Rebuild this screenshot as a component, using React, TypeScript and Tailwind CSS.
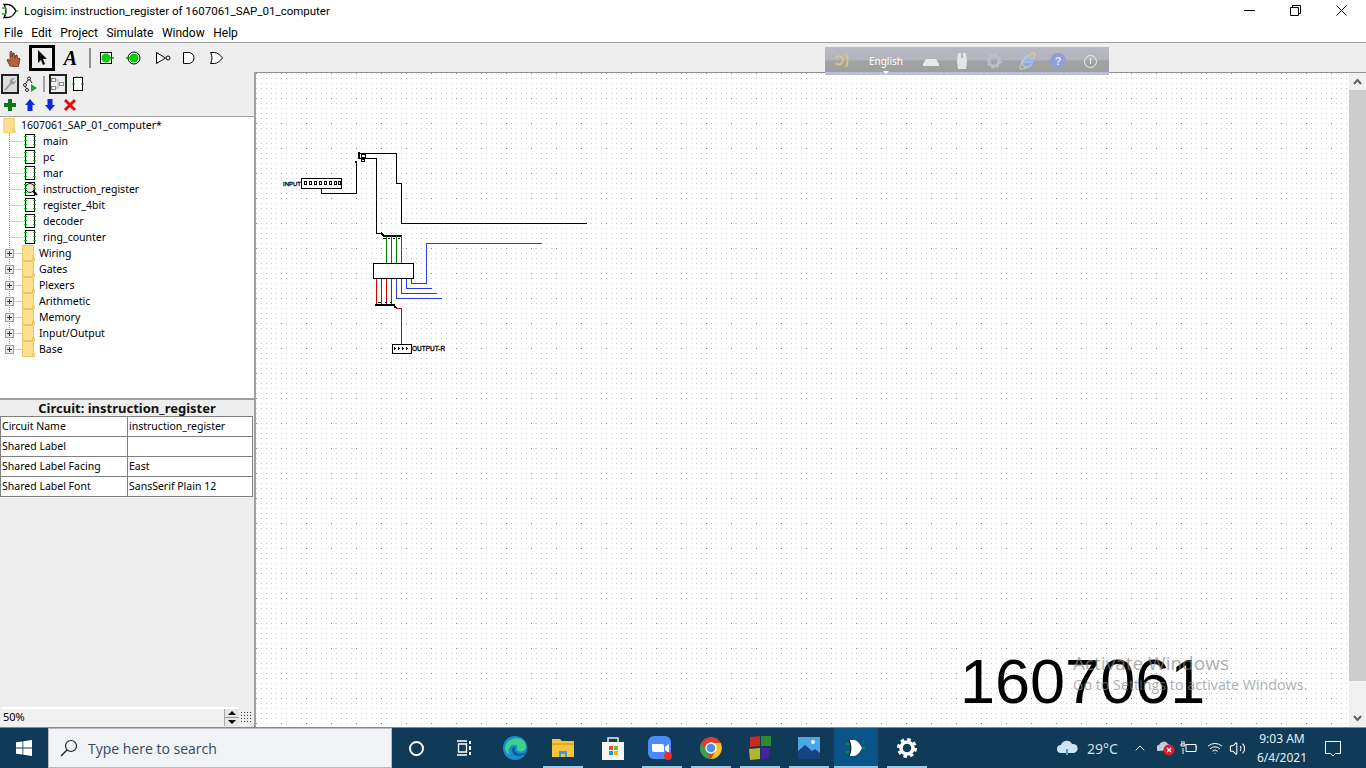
import { ChevronUp, Wifi, Volume2 } from 'lucide-react'

const circuits = ['main', 'pc', 'mar', 'instruction_register', 'register_4bit', 'decoder', 'ring_counter']
const libraries = ['Wiring', 'Gates', 'Plexers', 'Arithmetic', 'Memory', 'Input/Output', 'Base']
const attributes = [
  ['Circuit Name', 'instruction_register'],
  ['Shared Label', ''],
  ['Shared Label Facing', 'East'],
  ['Shared Label Font', 'SansSerif Plain 12'],
]
const menus = ['File', 'Edit', 'Project', 'Simulate', 'Window', 'Help']

function LogisimGate({ className, fill = 'none', stroke = '#000' }: { className?: string; fill?: string; stroke?: string }) {
  return (
    <svg className={className} viewBox="0 0 16 16">
      <path d="M2 1.500h4c3 0 6 3 8 6.500-2 3.500-5 6.500-8 6.500H2c2.500-4 2.500-9 0-13z" fill={fill} stroke={stroke} strokeWidth="1.300" />
      <path d="M0 5h4M0 11h4M14 8h2" stroke="#00c000" strokeWidth="1.300" />
    </svg>
  )
}

function Folder({ className }: { className?: string }) {
  return (
    <svg className={className} viewBox="0 0 13 16">
      <path d="M.5.5h11v13h1v2H.5z" fill="#fde08f" stroke="#ecc55f" />
      <path d="M10.500 15.500v-3h2" fill="none" stroke="#ecc55f" />
    </svg>
  )
}

function CircuitIcon({ zoomed }: { zoomed?: boolean }) {
  return (
    <svg className="w-[14px] h-[16px] shrink-0 overflow-visible" viewBox="0 0 14 16">
      <rect x="1.500" y="1.500" width="9" height="13" fill="#fff" stroke="#000" />
      {zoomed && <circle cx="6" cy="7" r="4.500" fill="#e4e4ee" stroke="#222" />}
      <path d="M0 3.500h3M0 7.500h3M0 11.500h3M9 3.500h3M9 7.500h3M9 11.500h3" stroke="#00c400" />
      {zoomed && <path d="M9 10l4 4" stroke="#000" strokeWidth="2" />}
    </svg>
  )
}

function TreeGuide({ expand, last }: { expand?: boolean; last?: boolean }) {
  return (
    <svg className="w-[22px] h-[16px] shrink-0" viewBox="0 0 22 16">
      <path d={`M9.500 0V${last ? 8 : 16}M9.500 8.500H22`} stroke="#9a9a9a" strokeDasharray="1 1" fill="none" />
      {expand && (
        <>
          <rect x="5.500" y="4.500" width="8" height="8" fill="#e8e8ee" stroke="#a0a0a8" />
          <path d="M7 8.500h5M9.500 6v5" stroke="#334" />
        </>
      )}
    </svg>
  )
}

function ToolStrip() {
  return (
    <div className="h-[29px] bg-[#eeeeee] flex items-center pl-[5px]">
      <svg className="w-[18px] h-[18px] mt-[1px]" viewBox="0 0 18 18">
        <path d="M5 17l-3-6 1-1 2 2V3l1-1 1 1v5l1-4 1 0 1 5 1-3 1 0 1 4 1-1 1 1-1 5-1 3z" fill="#b8613f" stroke="#5a2f1e" strokeWidth=".8" />
      </svg>
      <div className="w-[26px] h-[26px] ml-[6px] border-[3px] border-black flex items-center justify-center">
        <svg className="w-[14px] h-[18px]" viewBox="0 0 14 18">
          <path d="M3 1v13l3-3 2 5 2-1-2-5h4z" fill="#000" />
        </svg>
      </div>
      <span className="w-[31px] text-center font-['Liberation_Serif',serif] italic font-bold text-[20px] leading-none">A</span>
      <div className="w-[2px] h-[20px] bg-[#909090] ml-[3px]" />
      <svg className="w-[16px] h-[16px] ml-[7px]" viewBox="0 0 16 16">
        <rect x="2.500" y="2.500" width="11" height="11" fill="#fff" stroke="#000" />
        <circle cx="8" cy="8" r="4.500" fill="#00d000" />
        <path d="M12 8h4" stroke="#00a000" strokeWidth="1.500" />
      </svg>
      <svg className="w-[16px] h-[16px] ml-[12px]" viewBox="0 0 16 16">
        <circle cx="8" cy="8" r="6" fill="#fff" stroke="#000" />
        <circle cx="8" cy="8" r="4.500" fill="#00d000" />
        <path d="M0 8h4" stroke="#00a000" strokeWidth="1.500" />
      </svg>
      <svg className="w-[16px] h-[16px] ml-[13px]" viewBox="0 0 16 16">
        <path d="M1.500 2.500l9 5.500-9 5.500z" fill="#fff" stroke="#000" />
        <circle cx="13" cy="8" r="2" fill="#fff" stroke="#000" />
      </svg>
      <svg className="w-[16px] h-[16px] ml-[10px]" viewBox="0 0 16 16">
        <path d="M2.500 2.500h5a5.500 5.500 0 010 11h-5z" fill="#fff" stroke="#000" />
      </svg>
      <svg className="w-[16px] h-[16px] ml-[11px]" viewBox="0 0 16 16">
        <path d="M2.500 2.500h4c3 0 6 3 8 5.500-2 2.500-5 5.500-8 5.500h-4c2-3.500 2-7.500 0-11z" fill="#fff" stroke="#000" />
      </svg>
    </div>
  )
}

function ExplorerBar() {
  return (
    <>
      <div className="h-[23px] flex items-center pl-[1px] pt-[1px]">
        <div className="w-[18px] h-[20px] border-[2px] border-[#222] bg-[#dddddd] flex items-center justify-center">
          <svg className="w-[14px] h-[14px]" viewBox="0 0 14 14">
            <path d="M1 13l6-7c-1-3 1-5 5-5L9.500 3.500l1.500 1.500L13 3c0 3-2 5-5 4.500l-5 6z" fill="#9a9a9a" />
          </svg>
        </div>
        <svg className="w-[16px] h-[16px] ml-[3px]" viewBox="0 0 16 16">
          <circle cx="7" cy="2.500" r="1.500" fill="#fff" stroke="#222" />
          <circle cx="3" cy="9" r="1.500" fill="#fff" stroke="#222" />
          <circle cx="5" cy="14" r="1.500" fill="#fff" stroke="#222" />
          <path d="M6 4L3.500 7.500M3 10.500l1.500 2M8 4l2 3" fill="none" stroke="#222" />
          <path d="M9 8l6 4-6 4z" fill="#2d9a3c" />
        </svg>
        <div className="w-[2px] h-[16px] bg-[#a0a0a0] ml-[5px]" />
        <div className="w-[18px] h-[20px] ml-[4px] border-[2px] border-[#222] flex items-center justify-center">
          <svg className="w-[14px] h-[14px]" viewBox="0 0 14 14">
            <path d="M4 3h3v8H4M7 7h2" fill="none" stroke="#9fc09f" />
            <rect x=".5" y="1.500" width="4" height="3" fill="#eee" stroke="#888" />
            <rect x=".5" y="9.500" width="4" height="3" fill="#eee" stroke="#888" />
            <rect x="8.500" y="5.500" width="4" height="3" fill="#eee" stroke="#888" />
          </svg>
        </div>
        <svg className="w-[14px] h-[16px] ml-[4px]" viewBox="0 0 14 16">
          <rect x="2.500" y="1.500" width="9" height="13" fill="#fff" stroke="#000" />
          <path d="M5 1h2M9 1h2M1 8h3M10 8h3" stroke="#00b000" />
        </svg>
      </div>
      <div className="h-[21px] flex items-center pl-[3px] pb-[2px] gap-[6px]">
        <svg className="w-[14px] h-[14px]" viewBox="0 0 14 14"><path d="M5 1h4v4h4v4H9v4H5V9H1V5h4z" fill="#0a7a18" /></svg>
        <svg className="w-[14px] h-[14px]" viewBox="0 0 14 14"><path d="M7 1l5 6H9.500v6h-5V7H2z" fill="#0a2ae0" /></svg>
        <svg className="w-[14px] h-[14px]" viewBox="0 0 14 14"><path d="M7 13l5-6H9.500V1h-5v6H2z" fill="#0a2ae0" /></svg>
        <svg className="w-[14px] h-[14px]" viewBox="0 0 14 14"><path d="M2 2l10 10M12 2L2 12" stroke="#e01010" strokeWidth="3" /></svg>
      </div>
    </>
  )
}

function ProjectTree() {
  return (
    <div className="h-[284px] bg-white border-t border-[#a0a0a0] border-b-2 border-b-[#a0a0a0] overflow-hidden font-['Noto_Sans',sans-serif] text-[10.500px]">
      <div className="h-[16px] flex items-center pl-[3px]">
        <Folder className="w-[13px] h-[15px] shrink-0" />
        <span className="ml-[5px] mt-[2px]">1607061_SAP_01_computer*</span>
      </div>
      {circuits.map(name => (
        <div key={name} className="h-[16px] flex items-center">
          <TreeGuide />
          <div className="ml-[2px]"><CircuitIcon zoomed={name === 'instruction_register'} /></div>
          <span className="ml-[5px] mt-[2px]">{name}</span>
        </div>
      ))}
      {libraries.map((name, i) => (
        <div key={name} className="h-[16px] flex items-center">
          <TreeGuide expand last={i === libraries.length - 1} />
          <Folder className="w-[13px] h-[16px] shrink-0" />
          <span className="ml-[4px] mt-[2px]">{name}</span>
        </div>
      ))}
    </div>
  )
}

function AttributeTable() {
  return (
    <div className="font-['Noto_Sans',sans-serif] text-[10.500px]">
      <div className="h-[16px] pt-[2px] flex items-center justify-center font-bold text-[13px] text-[#111]">Circuit: instruction_register</div>
      <div className="mr-[1px] border-t border-l border-[#808080]">
        {attributes.map(([label, value]) => (
          <div key={label} className="h-[20px] flex bg-white border-b border-[#808080]">
            <div className="w-[127px] pl-[1px] flex items-center border-r border-[#808080]">{label}</div>
            <div className="flex-1 pl-[1px] flex items-center border-r border-[#808080]">{value}</div>
          </div>
        ))}
      </div>
    </div>
  )
}

function ZoomControl() {
  return (
    <div className="h-[20px] flex items-stretch pb-[1px] pl-[1px] font-['Noto_Sans',sans-serif] text-[11px]">
      <div className="w-[238px] bg-[#f0f0f0] border-t-2 border-white flex items-center pl-[2px] relative">
        50%
        <div className="absolute right-0 top-0 bottom-0 w-[15px] flex flex-col bg-[#e6e6e6] border-l border-[#aaa]">
          <div className="flex-1 flex items-center justify-center border-b border-[#999]">
            <div className="w-0 h-0 border-x-[4px] border-x-transparent border-b-[4px] border-b-black" />
          </div>
          <div className="flex-1 flex items-center justify-center">
            <div className="w-0 h-0 border-x-[4px] border-x-transparent border-t-[4px] border-t-black" />
          </div>
        </div>
      </div>
      <div className="flex-1 flex items-center justify-center">
        <svg className="w-[12px] h-[12px]" viewBox="0 0 12 12">
          <path d="M0 1.500h12M0 4.500h12M0 7.500h12M0 10.500h12" stroke="#333" strokeDasharray="1 2" />
        </svg>
      </div>
    </div>
  )
}

function Circuit() {
  const green = '#007a00'
  const blue = '#2a3ae6'
  const red = '#d20000'
  return (
    <svg className="w-full h-full block" shapeRendering="crispEdges">
      <defs>
        <pattern id="fine" width="5" height="5" patternUnits="userSpaceOnUse">
          <rect width="1" height="1" fill="#d2d2d2" />
        </pattern>
        <pattern id="coarse" width="25" height="25" patternUnits="userSpaceOnUse">
          <rect width="1" height="1" fill="#808080" />
        </pattern>
      </defs>
      <rect width="100%" height="100%" fill="url(#fine)" />
      <rect width="100%" height="100%" fill="url(#coarse)" />
      <g transform="translate(-256 -73)" fill="none" stroke="#000">
        <path d="M358.500 153.500H396.500V183.500H401.500V223.500H586.500" />
        <path d="M360 158.500H376.500V233.500H381" />
        <path d="M321.500 188V193.500H356.500V161" />
        <path d="M358.500 152V159" strokeWidth="2" />
        <rect x="361.500" y="154.500" width="4" height="3" />
        <rect x="361.500" y="159.500" width="3" height="2" />
        <path d="M355 162h2" strokeWidth="2" />
        <rect x="301.500" y="178.500" width="40" height="10" fill="#fff" />
        <path d="M304 181.500v3h2v-3zM309 181.500v3h2v-3zM314 181.500v3h2v-3zM319 181.500v3h2v-3zM324 181.500v3h2v-3zM329 181.500v3h2v-3zM334 181.500v3h2v-3zM338 181.500v3h2v-3z" />
        <path d="M381 233l3 3" strokeWidth="2" />
        <path d="M383 235.500H402" strokeWidth="2" />
        <g stroke={green}>
          <path d="M386.500 236V263M391.500 236V263M396.500 236V263M401.500 236V263" />
        </g>
        <path d="M383 238.500h3M388 238.500h2M393 238.500h2M398 238.500h2" />
        <rect x="373.500" y="263.500" width="40" height="15" fill="#fff" />
        <g stroke={red}>
          <path d="M376.500 279V304M381.500 279V304M386.500 279V304M391.500 279V304" />
          <path d="M396 308.500H401.500V344" />
        </g>
        <g stroke={blue}>
          <path d="M396.500 279V298.500H441.500" />
          <path d="M401.500 279V293.500H436.500" />
          <path d="M406.500 279V288.500H431.500" />
          <path d="M411.500 279V283.500H426.500V243.500H541.500" />
        </g>
        <path d="M375 304.500H394" strokeWidth="2" />
        <path d="M378 302.500h3M385 302.500h2M390 302.500h2" />
        <path d="M393 304l3 4" strokeWidth="2" />
        <rect x="392.500" y="344.500" width="19" height="9" fill="#fff" />
        <path d="M394 348.500h2M398 348.500h2M402 348.500h2M406 348.500h2M394 346.500v3M398 346.500v3M402 346.500v3M406 346.500v3" />
      </g>
      <text x="27" y="113" fontSize="6" fill="#000" stroke="#000" strokeWidth=".3" className="font-['Liberation_Sans',sans-serif]">INPUT</text>
      <text x="156" y="278" fontSize="6.500" fill="#000" stroke="#000" strokeWidth=".3" className="font-['Liberation_Sans',sans-serif]">OUTPUT-R</text>
    </svg>
  )
}

function ScrollBar() {
  return (
    <div className="w-[17px] shrink-0 bg-[#f0f0f0] flex flex-col items-stretch">
      <div className="h-[17px] flex items-center justify-center">
        <svg className="w-[9px] h-[7px]" viewBox="0 0 9 7"><path d="M1 6l3.500-4L8 6" fill="none" stroke="#606060" strokeWidth="2" /></svg>
      </div>
      <div className="h-[591px] bg-[#cdcdcd]" />
      <div className="flex-1" />
      <div className="h-[17px] flex items-center justify-center">
        <svg className="w-[9px] h-[7px]" viewBox="0 0 9 7"><path d="M1 1l3.500 4L8 1" fill="none" stroke="#606060" strokeWidth="2" /></svg>
      </div>
    </div>
  )
}

function LanguageBar() {
  return (
    <div className="absolute left-[825px] top-[47px] w-[284px] h-[28px] bg-[linear-gradient(#b7b9c3_0%,#b3b4bd_45%,#a3a3a3_50%,#9f9f9f_88%,#b9bfd8_89%)] flex items-center text-white">
      <svg className="w-[16px] h-[18px] ml-[9px] shrink-0" viewBox="0 0 16 18">
        <path d="M1 6c3-3 8-2 8 2s-5 6-7 3M12 2c2 4 2 9 0 13" fill="none" stroke="#dcc583" strokeWidth="1.800" />
      </svg>
      <div className="w-[60px] ml-[6px] flex flex-col items-center shrink-0 pt-[6px]">
        <span className="text-[10px] leading-[12px] font-['Noto_Sans',sans-serif]">English</span>
        <div className="w-0 h-0 mt-[4px] border-x-[3px] border-x-transparent border-t-[3px] border-t-white" />
      </div>
      <svg className="w-[18px] h-[14px] ml-[6px] shrink-0" viewBox="0 0 18 14">
        <path d="M4 5h10l3 5v2H1v-2z" fill="#e8e8e8" />
      </svg>
      <svg className="w-[12px] h-[18px] ml-[16px] shrink-0" viewBox="0 0 12 18">
        <path d="M2 1h3v5h2V1h3l1 8-1 8H2L1 9z" fill="#e5e5e5" />
      </svg>
      <svg className="w-[16px] h-[16px] ml-[18px] shrink-0" viewBox="0 0 16 16">
        <circle cx="8" cy="8" r="5" fill="none" stroke="#b9c0cc" strokeWidth="3" />
        <circle cx="8" cy="8" r="7" fill="none" stroke="#b9c0cc" strokeWidth="1.500" strokeDasharray="2.500 3" />
      </svg>
      <svg className="w-[16px] h-[18px] ml-[17px] shrink-0" viewBox="0 0 16 18">
        <path d="M3.500 10h9.500c0-6-7-7-9.500-2-1 3 0 7 4 7 2 0 4-1 5-3" fill="none" stroke="#9ac0f4" strokeWidth="2.400" />
        <path d="M1 17C0 11 9 2 15 1c1.500 2 0 5-1 6M1 17c2 1 5-1 7-2" fill="none" stroke="#ecd386" strokeWidth="1" />
      </svg>
      <div className="w-[16px] h-[16px] ml-[15px] shrink-0 rounded-full bg-[#8f9fd8] flex items-center justify-center text-[11px] font-bold text-[#dfe6fa] leading-none">?</div>
      <div className="w-[13px] h-[13px] ml-[18px] shrink-0 rounded-full border-[1.500px] border-[#eeeeee] flex items-center justify-center">
        <div className="w-[1.500px] h-[6px] bg-[#eeeeee]" />
      </div>
    </div>
  )
}

function TaskIcon({ children, active, open, w = 49, className = '' }: { children: React.ReactNode; active?: boolean; open?: boolean; w?: number; className?: string }) {
  return (
    <div className={`relative flex items-center justify-center shrink-0 h-full ${active ? 'bg-[#0a5488]' : ''} ${className}`} style={{ width: w }}>
      {children}
      {open && <div className="absolute bottom-0 left-0 right-0 h-[2px] bg-[#99c9e8]" />}
    </div>
  )
}

function Taskbar() {
  return (
    <div className="h-[41px] shrink-0 bg-[#0f3b58] border-t border-[#7d8a94] flex items-stretch text-white font-['Noto_Sans',sans-serif]">
      <div className="w-[48px] flex items-center justify-center">
        <svg className="w-[16px] h-[16px]" viewBox="0 0 16 16">
          <path d="M0 2.300L6.500 1.400V7.600H0zM7.300 1.300L16 0V7.600H7.300zM0 8.400H6.500V14.600L0 13.700zM7.300 8.400H16V16L7.300 14.700z" fill="#fff" />
        </svg>
      </div>
      <div className="w-[344px] bg-[#f1f3f6] border border-[#b8bcc0] flex items-center pl-[11px] text-[#2f4a60] text-[14px]">
        <svg className="w-[18px] h-[18px] shrink-0" viewBox="0 0 18 18">
          <circle cx="11" cy="7" r="5.500" fill="none" stroke="#222" strokeWidth="1.200" />
          <path d="M7 11l-6 6" stroke="#222" strokeWidth="1.500" />
        </svg>
        <span className="ml-[10px] font-['Open_Sans',sans-serif]">Type here to search</span>
      </div>
      <TaskIcon w={48}>
        <div className="w-[15px] h-[15px] rounded-full border-[2px] border-white" />
      </TaskIcon>
      <TaskIcon w={47}>
        <svg className="w-[18px] h-[16px]" viewBox="0 0 18 16">
          <path d="M2 1h10M2 15h10M3.500 4h8v8h-8z" fill="none" stroke="#fff" strokeWidth="1.300" />
          <path d="M15 1v3M15 6v4M15 12v3" stroke="#fff" strokeWidth="2" />
        </svg>
      </TaskIcon>
      <TaskIcon w={56}>
        <svg className="w-[24px] h-[24px]" viewBox="0 0 24 24">
          <circle cx="12" cy="12" r="12" fill="#1a8fd0" />
          <path d="M2 12C3 3 14-1 21 5c3 3 3 9-1 10-3 1-7 0-6-3 1-2-1-4-4-3-4 1-6 6-3 10-3-1-5-4-5-7z" fill="#3dd28a" />
          <path d="M9 14c0 4 4 7 9 6 2-.500 4-2 5-4-3 2-7 2-9 1-2-1-3-3-2-6-2 0-3 1-3 3z" fill="#0c59a4" />
        </svg>
      </TaskIcon>
      <TaskIcon w={40} open>
        <svg className="w-[22px] h-[18px]" viewBox="0 0 22 18">
          <path d="M0 0h8l2 2h12v16H0z" fill="#f5c542" />
          <path d="M0 4h22v2H0z" fill="#e5a82a" />
          <path d="M7 18v-6h8v6h-2v-3H9v3z" fill="#3d9be0" />
        </svg>
      </TaskIcon>
      <TaskIcon w={59}>
        <svg className="w-[24px] h-[24px]" viewBox="0 0 24 24">
          <path d="M1 6h22v18H1z" fill="#f6f6f6" />
          <path d="M7 6V2h10v4" fill="none" stroke="#e8e8e8" strokeWidth="1.500" />
          <path d="M8 10h4v4H8z" fill="#e74c2b" />
          <path d="M13 10h4v4h-4z" fill="#7dba2e" />
          <path d="M8 15h4v4H8z" fill="#1a9be0" />
          <path d="M13 15h4v4h-4z" fill="#f5b800" />
        </svg>
      </TaskIcon>
      <TaskIcon w={40} open>
        <svg className="w-[24px] h-[24px] -ml-[4px]" viewBox="0 0 24 24">
          <rect width="23" height="23" rx="6" fill="#4a8cff" />
          <path d="M4 8h10a2 2 0 012 2v6H6a2 2 0 01-2-2zM17 11l4-3v9l-4-3z" fill="#fff" />
          <circle cx="20" cy="20" r="4" fill="#ee2a2a" />
        </svg>
      </TaskIcon>
      <TaskIcon w={40} open className="ml-[9px]">
        <svg className="w-[22px] h-[22px]" viewBox="0 0 22 22">
          <circle cx="11" cy="11" r="11" fill="#e33b2e" />
          <path d="M11 6h9.500A11 11 0 0 1 11 22l4.500-8z" fill="#f8c91c" />
          <path d="M1.500 5.500L6.500 14 11 22A11 11 0 0 1 1.500 5.500z" fill="#2fa44f" />
          <circle cx="11" cy="11" r="5" fill="#4a8fe8" stroke="#fff" strokeWidth="1.500" />
        </svg>
      </TaskIcon>
      <TaskIcon w={40} open className="ml-[9px]">
        <svg className="w-[22px] h-[24px]" viewBox="0 0 22 24">
          <path d="M1 1l10-1v10L1 11z" fill="#c62a22" />
          <path d="M12 0l10 0v10H12z" fill="#2c8a32" />
          <path d="M0 13l11-1v11L1 24z" fill="#b6b52f" />
          <path d="M12 12h9l-1 10-8 1z" fill="#4b1fa0" />
        </svg>
      </TaskIcon>
      <TaskIcon w={40} open className="ml-[9px]">
        <svg className="w-[22px] h-[22px]" viewBox="0 0 22 22">
          <rect width="22" height="22" fill="#4aa8ea" />
          <path d="M0 22V14l7-6 7 6 3-2 5 4v6z" fill="#16447f" />
          <circle cx="15" cy="5" r="2" fill="#fff" />
        </svg>
      </TaskIcon>
      <TaskIcon w={44} active open className="ml-[5px]">
        <svg className="w-[22px] h-[18px]" viewBox="0 0 22 18">
          <path d="M4 1h5c3 0 6 4 8 8-2 4-5 8-8 8H4c2.500-5 2.500-11 0-16z" fill="#fff" />
          <path d="M4 1c2.500 5 2.500 11 0 16" fill="none" stroke="#000" />
          <path d="M1 5h4M1 13h4M17 9h3" stroke="#00c000" />
        </svg>
      </TaskIcon>
      <TaskIcon w={40} open className="ml-[9px]">
        <svg className="w-[20px] h-[20px]" viewBox="0 0 20 20">
          <circle cx="10" cy="10" r="6" fill="none" stroke="#fff" strokeWidth="3.500" />
          <circle cx="10" cy="10" r="8.500" fill="none" stroke="#fff" strokeWidth="3" strokeDasharray="3.500 3.170" />
        </svg>
      </TaskIcon>
      <div className="flex-1 flex items-center text-[#d6dfe6]">
        <svg className="w-[22px] h-[16px] ml-[129px] shrink-0" viewBox="0 0 22 16">
          <path d="M5 13a4 4 0 010-8 6 6 0 0111-1 4.500 4.500 0 012 9z" fill="#cfe3f3" />
          <path d="M11 9v6" stroke="#4a9ae0" strokeWidth="2" />
        </svg>
        <span className="ml-[9px] w-[30px] text-[14px] whitespace-nowrap">29°C</span>
        <ChevronUp className="ml-[15px] w-[16px] h-[16px] shrink-0 text-white" strokeWidth={1.500} />
        <svg className="w-[18px] h-[16px] ml-[9px] shrink-0" viewBox="0 0 18 16">
          <path d="M2 11a3 3 0 010-6 5 5 0 019-1 4 4 0 013 6z" fill="#c8ccd0" />
          <circle cx="12" cy="10" r="5.500" fill="#d8202a" />
          <path d="M10 8l4 4M14 8l-4 4" stroke="#fff" strokeWidth="1.300" />
        </svg>
        <svg className="w-[17px] h-[14px] ml-[5px] shrink-0" viewBox="0 0 17 14">
          <path d="M6 3.500h10v7H6zM16 5.500h1v3" fill="none" stroke="#fff" />
          <path d="M1 3v2h4V3zM3 7v6" fill="none" stroke="#fff" />
          <path d="M2 0v3M4 0v3" stroke="#fff" />
        </svg>
        <Wifi className="ml-[10px] w-[16px] h-[16px] shrink-0 text-white" strokeWidth={1.500} />
        <Volume2 className="ml-[6px] w-[17px] h-[17px] shrink-0 text-white" strokeWidth={1.500} />
        <div className="w-[62px] ml-[5px] flex flex-col items-center text-[12px] leading-[19px] text-[#e8eef2] shrink-0 -mt-[1px]">
          <span>9:03 AM</span>
          <span>6/4/2021</span>
        </div>
        <svg className="ml-[11px] w-[18px] h-[18px] shrink-0" viewBox="0 0 18 18">
          <path d="M1.500 2.500h15v12h-5l-2.500 2.500-2.500-2.500h-5z" fill="none" stroke="#fff" />
        </svg>
      </div>
    </div>
  )
}

export default function App() {
  return (
    <div className="relative w-[1366px] h-[768px] overflow-hidden bg-white text-black flex flex-col font-['Liberation_Sans',sans-serif] text-[11px]">
      <div className="h-[22px] shrink-0 flex items-center pl-[2px] pt-[2px] text-[11.500px] font-['Roboto',sans-serif]">
        <LogisimGate className="w-[16px] h-[16px] -mt-[2px]" />
        <span className="ml-[6px] flex-1">Logisim: instruction_register of 1607061_SAP_01_computer</span>
        <svg className="w-[11px] h-[11px] -mt-[3px]" viewBox="0 0 11 11"><path d="M0 5.500h11" stroke="#000" /></svg>
        <svg className="w-[11px] h-[11px] ml-[35px] -mt-[3px]" viewBox="0 0 11 11">
          <path d="M.5 2.500h8v8h-8zM2.500 2.500v-2h8v8h-2" fill="none" stroke="#000" />
        </svg>
        <svg className="w-[11px] h-[11px] ml-[35px] mr-[19px] -mt-[3px]" viewBox="0 0 11 11"><path d="M.5.5l10 10M10.500.5l-10 10" stroke="#000" /></svg>
      </div>
      <div className="h-[20px] shrink-0 flex items-center gap-[8.500px] pl-[4px] pt-[2px] text-[12px] font-['Roboto',sans-serif]">
        {menus.map(m => <span key={m}>{m}</span>)}
      </div>
      <div className="h-px shrink-0 bg-[#a0a0a0]" />
      <ToolStrip />
      <div className="flex-1 min-h-0 flex">
        <aside className="w-[256px] shrink-0 bg-[#eeeeee] border-r-2 border-[#a0a0a0] flex flex-col">
          <ExplorerBar />
          <ProjectTree />
          <AttributeTable />
          <div className="flex-1" />
          <ZoomControl />
        </aside>
        <main className="flex-1 min-w-0 flex border-t border-[#909090] bg-white">
          <div className="relative flex-1 min-w-0">
            <Circuit />
            <span className="absolute left-[704px] top-[577px] text-[63px] leading-none text-black whitespace-nowrap">1607061</span>
            <div className="absolute left-[817px] top-[578px] text-[#8a8a8a]/70 font-['Open_Sans',sans-serif] whitespace-nowrap">
              <div className="text-[19px] leading-[24px]">Activate Windows</div>
              <div className="text-[14.300px] leading-[20px]">Go to Settings to activate Windows.</div>
            </div>
          </div>
          <ScrollBar />
        </main>
      </div>
      <Taskbar />
      <LanguageBar />
    </div>
  )
}
